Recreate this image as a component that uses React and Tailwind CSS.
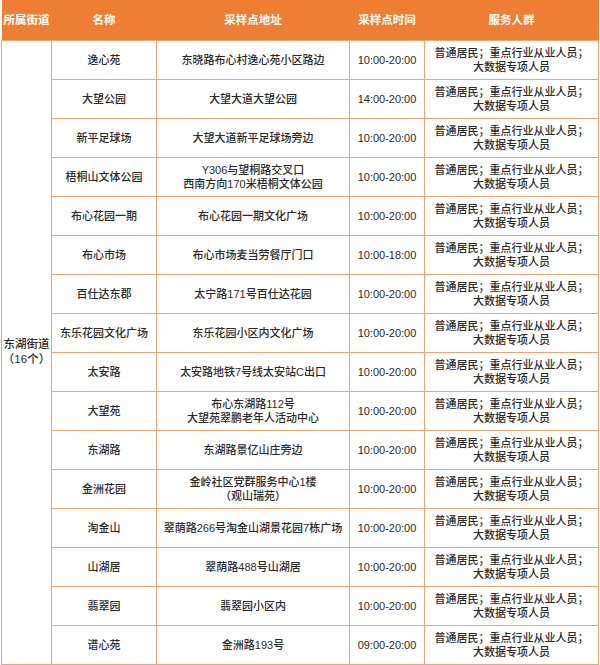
const rows = [
    ["逸心苑", ["东晓路布心村逸心苑小区路边"], "10:00-20:00"],
    ["大望公园", ["大望大道大望公园"], "14:00-20:00"],
    ["新平足球场", ["大望大道新平足球场旁边"], "10:00-20:00"],
    ["梧桐山文体公园", ["Y306与望桐路交叉口", "西南方向170米梧桐文体公园"], "10:00-20:00"],
    ["布心花园一期", ["布心花园一期文化广场"], "10:00-20:00"],
    ["布心市场", ["布心市场麦当劳餐厅门口"], "10:00-18:00"],
    ["百仕达东郡", ["太宁路171号百仕达花园"], "10:00-20:00"],
    ["东乐花园文化广场", ["东乐花园小区内文化广场"], "10:00-20:00"],
    ["太安路", ["太安路地铁7号线太安站C出口"], "10:00-20:00"],
    ["大望苑", ["布心东湖路112号", "大望苑翠鹏老年人活动中心"], "10:00-20:00"],
    ["东湖路", ["东湖路景亿山庄旁边"], "10:00-20:00"],
    ["金洲花园", ["金岭社区党群服务中心1楼", "（观山瑞苑）"], "10:00-20:00"],
    ["淘金山", ["翠荫路266号淘金山湖景花园7栋广场"], "10:00-20:00"],
    ["山湖居", ["翠荫路488号山湖居"], "10:00-20:00"],
    ["翡翠园", ["翡翠园小区内"], "10:00-20:00"],
    ["谱心苑", ["金洲路193号"], "09:00-20:00"],
];

const cell = "border border-[#f2a46c] text-center align-middle px-0 whitespace-nowrap";

export default function App() {
    return (
        <div
            className="w-[600px] h-[665px] bg-white overflow-hidden text-[11px] leading-[14px] text-[#2a2a2a] font-medium"
            style={{ fontFamily: '"Liberation Sans", "Noto Sans CJK SC", sans-serif' }}
        >
            <table className="w-[598px] ml-px border-collapse table-fixed">
                <colgroup>
                    <col className="w-[50px]" />
                    <col className="w-[105px]" />
                    <col className="w-[193px]" />
                    <col className="w-[75px]" />
                    <col />
                </colgroup>
                <thead>
                    <tr className="h-[40px] bg-[#ee7e33] text-white text-[11.5px]">
                        <th className="font-bold whitespace-nowrap">所属街道</th>
                        <th className="font-bold">名称</th>
                        <th className="font-bold">采样点地址</th>
                        <th className="font-bold">采样点时间</th>
                        <th className="font-bold">服务人群</th>
                    </tr>
                </thead>
                <tbody>
                    {rows.map((r, i) => (
                        <tr key={i} className="h-[39px]">
                            {i === 0 && (
                                <td rowSpan={16} className={cell + " text-[11.5px] leading-[15px]"}>
                                    东湖街道
                                    <br />
                                    （16个）
                                </td>
                            )}
                            <td className={cell}>{r[0]}</td>
                            <td className={cell}>
                                {r[1].map((l, j) => (
                                    <div key={j}>{l}</div>
                                ))}
                            </td>
                            <td className={cell + " font-normal"}>{r[2]}</td>
                            <td className={cell}>
                                <div>普通居民；重点行业从业人员；</div>
                                <div>大数据专项人员</div>
                            </td>
                        </tr>
                    ))}
                </tbody>
            </table>
        </div>
    );
}
